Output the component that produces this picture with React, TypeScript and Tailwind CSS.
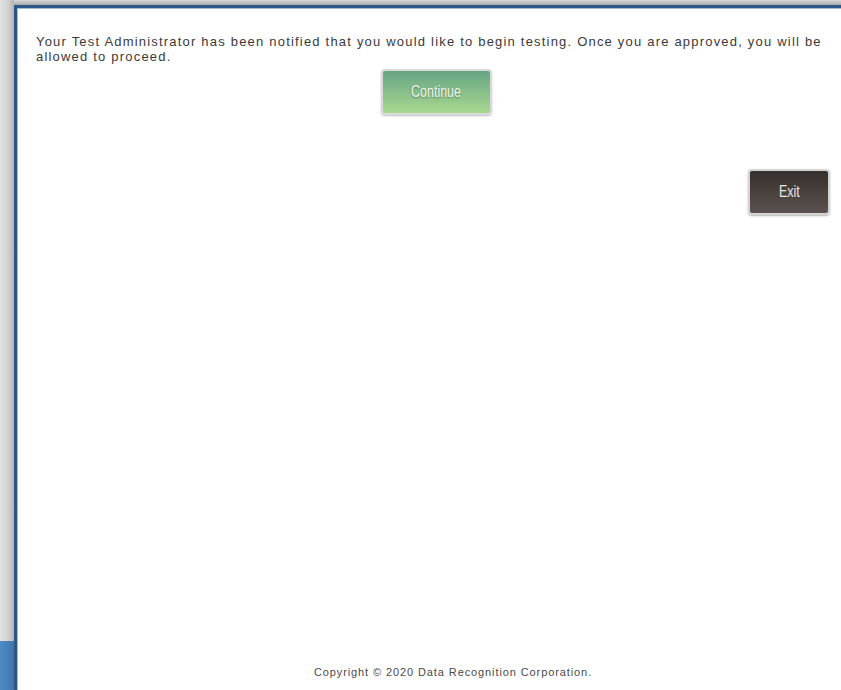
import React from "react";

const WaitingRoom = () => {
  return (
    <div className="flex h-[690px] w-[841px] overflow-hidden bg-white font-['Liberation_Sans',Arial,sans-serif]">
      {/* desktop strip behind the window */}
      <div className="flex w-[14px] flex-col">
        <div className="flex-1 bg-gradient-to-r from-[#e2e2e2] via-[#d6d6d6] to-[#b4b4b4]" />
        <div className="h-[49px] bg-gradient-to-r from-[#4e8cc6] to-[#3f76ab]" />
      </div>

      <div className="flex flex-1 flex-col">
        <div className="h-[5px] bg-gradient-to-b from-[#d8d8d8] to-[#a9a9a9]" />
        <div className="flex flex-1 flex-col border-l-[3px] border-t-[3px] border-[#2d5688]">
          <div className="flex flex-1 flex-col border-l border-t border-[#9fbbd8] pl-[18px] pr-[11px] pt-[25px]">
            <p className="text-[13px] leading-[15px] tracking-[1.2px] text-[#3a3a3a]">
              Your Test Administrator has been notified that you would like to begin testing. Once you are approved, you will be allowed to proceed.
            </p>

            <div className="mt-[5px] flex justify-center pl-[7px]">
              <button className="h-[46px] w-[111px] rounded-[4px] border-2 border-[#d9d9d9] bg-gradient-to-b from-[#66a584] to-[#a9d88f] text-[16px] text-[#eef6ea] shadow-[0_1px_2px_rgba(0,0,0,0.25)] [text-shadow:0_1px_2px_rgba(0,0,0,0.35)]">
                <span className="inline-block scale-x-[0.78]">Continue</span>
              </button>
            </div>

            <div className="mt-[54px] flex justify-end">
              <button className="h-[46px] w-[82px] rounded-[4px] border-2 border-[#d4d4d4] bg-gradient-to-b from-[#352f2c] to-[#5c5350] text-[16px] text-[#ebe7e4] shadow-[0_1px_2px_rgba(0,0,0,0.3)]">
                <span className="inline-block scale-x-[0.78]">Exit</span>
              </button>
            </div>

            <div className="flex-1" />

            <p className="pb-[10px] pl-[40px] text-center text-[11px] tracking-[0.9px] text-[#4a4a4a]">
              Copyright © 2020 Data Recognition Corporation.
            </p>
          </div>
        </div>
      </div>
    </div>
  );
};

export default function App() {
  return <WaitingRoom />;
}
